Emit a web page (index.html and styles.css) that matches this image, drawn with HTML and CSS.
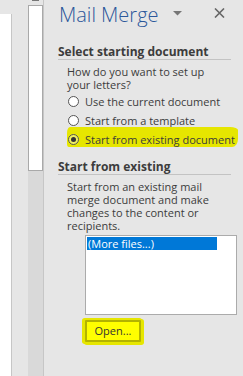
FILE: index.html
```html
<!DOCTYPE html>
<html lang="en">

<head>
    <meta charset="UTF-8">
    <meta name="viewport" content="width=device-width, initial-scale=1.0">
    <title>Mail Merge</title>
    <link rel="stylesheet" href="styles.css">
</head>

<body>

    <div class="app">
        <div class="doc">
            <div class="page"></div>
        </div>

        <div class="vscroll">
            <div class="arrow"><span></span></div>
            <div class="thumb"></div>
            <div class="track"></div>
        </div>

        <aside class="pane">
            <div class="pane-head">
                <h1>Mail Merge</h1>
                <svg class="menu" width="10" height="5" viewBox="0 0 10 5">
                    <path d="M0 0 L9 0 L4.5 4.5 Z" fill="#767676" />
                </svg>
                <svg class="close" width="11" height="10" viewBox="0 0 11 10">
                    <path d="M1 0.5 L10 9.5 M10 0.5 L1 9.5" stroke="#666" stroke-width="1.6" />
                </svg>
            </div>

            <section class="group">
                <h2>Select starting document</h2>
                <p>How do you want to set up your letters?</p>
                <div class="radio"><span class="dot"></span>Use the current document</div>
                <div class="radio"><span class="dot"></span>Start from a template</div>
                <div class="radio marked"><span class="dot checked"></span>Start from existing document</div>
            </section>

            <section class="group">
                <h2>Start from existing</h2>
                <p>Start from an existing mail merge document and make changes to the content or recipients.</p>
                <div class="listbox">
                    <div class="item selected">(More files...)</div>
                </div>
                <div class="open-wrap">
                    <button class="open">Open...</button>
                </div>
            </section>
        </aside>
    </div>

</body>

</html>
```

FILE: styles.css
```css
body {
    margin: 0;
    background-color: #e6e6e6;
    font-family: "Open Sans", "Noto Sans", sans-serif;
    color: #3c3c3c;
    overflow: hidden;
}

.app {
    display: flex;
    height: 376px;
}

/* document area on the left */
.doc {
    flex-shrink: 0;
    width: 28px;
    padding-top: 14px;
    box-sizing: border-box;
}

.page {
    width: 11px;
    height: 100%;
    background-color: white;
    border-right: 1px solid #c6c6c6;
}

/* vertical scrollbar */
.vscroll {
    flex-shrink: 0;
    width: 15px;
    display: flex;
    flex-direction: column;
    border-right: 1px solid #c6c6c6;
}

.arrow {
    height: 6px;
    box-sizing: border-box;
    border-bottom: 1px solid #a9a9a9;
    display: flex;
    justify-content: center;
}

.arrow span {
    width: 7px;
    height: 1px;
    background-color: #777;
}

.thumb {
    height: 164px;
    background-color: white;
    border: 1px solid #a9a9a9;
    border-top: none;
}

.track {
    flex: 1;
    background-color: #d9d9d9;
}

/* task pane */
.pane {
    flex: 1;
    min-width: 0;
    padding-left: 14px;
    padding-right: 12px;
}

.pane-head {
    display: flex;
    align-items: flex-start;
    height: 45px;
}

.pane-head h1 {
    margin: 3px 0 0 1px;
    font-size: 20px;
    font-weight: 300;
    color: #2b579a;
    line-height: 24px;
}

.menu {
    margin: 11px 0 0 14px;
}

.close {
    margin: 8px 0 0 31px;
}

.group {
    margin-bottom: 11px;
}

.group h2 {
    margin: 0;
    font-size: 12px;
    font-weight: 700;
    line-height: 14px;
    border-bottom: 1px solid #c3c3c3;
}

.group p {
    margin: 5px 14px 0 9px;
    font-size: 11px;
    line-height: 13px;
}

.radio {
    display: flex;
    align-items: center;
    margin-left: 10px;
    height: 19px;
    font-size: 11px;
    white-space: nowrap;
    position: relative;
}

.group p+.radio {
    margin-top: 1px;
}

.dot {
    flex-shrink: 0;
    width: 11px;
    height: 11px;
    box-sizing: border-box;
    border: 1px solid #555;
    border-radius: 50%;
    background-color: white;
    margin-right: 6px;
    display: flex;
    align-items: center;
    justify-content: center;
}

.dot.checked {
    background-color: #f0f060;
}

.dot.checked::after {
    content: "";
    width: 5px;
    height: 5px;
    border-radius: 50%;
    background-color: #333;
}

/* hand drawn highlighter over the last option */
.marked {
    isolation: isolate;
}

.marked::before {
    content: "";
    position: absolute;
    top: -3px;
    bottom: 2px;
    left: -1px;
    right: -7px;
    background-color: #e6e600;
    border-radius: 3px 8px 6px 2px / 6px 3px 8px 3px;
    z-index: -1;
}

.listbox {
    margin: 3px 0 0 27px;
    width: 148px;
    height: 76px;
    background-color: white;
    border: 1px solid #ababab;
    padding: 1px;
}

.item {
    font-size: 11px;
    line-height: 13px;
    width: 129px;
    padding-left: 1px;
}

.item.selected {
    background-color: #0078d7;
    color: white;
}

.open-wrap {
    margin: 3px 0 0 27px;
}

.open {
    font-family: "Open Sans", "Noto Sans", sans-serif;
    font-size: 11px;
    color: #333;
    width: 56px;
    height: 22px;
    padding: 0;
    background-color: #ffff00;
    border: 2px solid #b3b300;
    box-shadow: 1px 1px 0 2px #e6e600, -1px 0 0 2px #e6e600;
    border-radius: 1px;
}
```
